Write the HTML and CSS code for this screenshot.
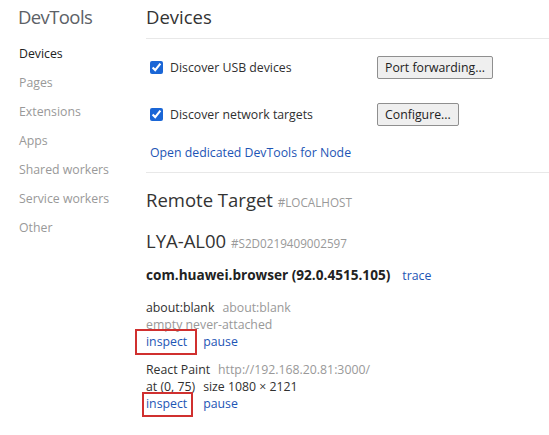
FILE: index.html
```html
<!DOCTYPE html>
<html>
<head>
<meta charset="utf-8">
<link rel="stylesheet" href="styles.css">
</head>
<body>
<div class="page">
  <nav class="sidebar">
    <div class="brand">DevTools</div>
    <ul class="menu">
      <li class="menu-item active">Devices</li>
      <li class="menu-item">Pages</li>
      <li class="menu-item">Extensions</li>
      <li class="menu-item">Apps</li>
      <li class="menu-item">Shared workers</li>
      <li class="menu-item">Service workers</li>
      <li class="menu-item">Other</li>
    </ul>
  </nav>
  <main class="content">
    <h1 class="page-title">Devices</h1>
    <section class="settings">
      <div class="setting-row">
        <label class="check"><input type="checkbox" checked><span>Discover USB devices</span></label>
        <button class="btn">Port forwarding...</button>
      </div>
      <div class="setting-row">
        <label class="check"><input type="checkbox" checked><span>Discover network targets</span></label>
        <button class="btn">Configure...</button>
      </div>
      <a class="node-link">Open dedicated DevTools for Node</a>
    </section>
    <section class="remote">
      <h2 class="section-title">Remote Target <span class="tag">#LOCALHOST</span></h2>
      <h2 class="section-title device">LYA-AL00 <span class="tag">#S2D0219409002597</span></h2>
      <div class="browser"><span class="browser-name">com.huawei.browser (92.0.4515.105)</span><a class="action trace">trace</a></div>
      <div class="target">
        <div class="line"><span class="name">about:blank</span><span class="url">about:blank</span></div>
        <div class="line dim">empty never-attached</div>
        <div class="line actions"><a class="action inspect mark-a">inspect</a><a class="action">pause</a></div>
      </div>
      <div class="target">
        <div class="line"><span class="name">React Paint</span><span class="url">http://192.168.20.81:3000/</span></div>
        <div class="line"><span>at (0, 75)</span><span class="size">size 1080 × 2121</span></div>
        <div class="line actions"><a class="action inspect mark-b">inspect</a><a class="action">pause</a></div>
      </div>
    </section>
  </main>
</div>
</body>
</html>
```

FILE: styles.css
```css
* { box-sizing: border-box; }
html, body { margin: 0; padding: 0; background: #fff; }
body {
  font-family: "Open Sans", "Noto Sans", sans-serif;
  font-size: 12.3px;
  color: #303030;
}
.page { display: flex; width: 549px; height: 435px; overflow: hidden; }
.sidebar { width: 146px; flex: none; padding-left: 18px; }
.brand {
  height: 39px;
  line-height: 33px;
  font-size: 18.5px;
  letter-spacing: -0.6px;
  color: #5c6166;
}
.menu { list-style: none; margin: 0; padding: 0 0 0 1px; }
.menu-item { height: 29px; line-height: 29px; color: #999; }
.menu-item.active { color: #222; }

.content { flex: 1; min-width: 0; }
.page-title {
  margin: 0;
  height: 39px;
  line-height: 34px;
  font-size: 18.5px;
  font-weight: normal;
  color: #333;
  border-bottom: 1px solid #e8e8e8;
}
.settings {
  padding: 17px 0 9px 4px;
  border-bottom: 1px solid #e8e8e8;
  display: flex;
  flex-direction: column;
}
.setting-row { display: flex; align-items: center; height: 23px; margin-bottom: 24px; }
.setting-row + .setting-row { margin-bottom: 17px; }
.check { display: flex; align-items: center; width: 227px; }
.check input {
  margin: 0 7px 0 0;
  width: 13px; height: 13px;
  accent-color: #1a66d6;
}
.btn {
  font: inherit;
  height: 23px;
  padding: 0 7px;
  background: #efefef;
  border: 1px solid #8f8f8f;
  border-radius: 2px;
  color: #222;
}
.node-link { color: #1d55b5; line-height: 20px; }

.remote { padding-top: 13px; }
.section-title {
  margin: 0 0 13px;
  height: 28px;
  line-height: 28px;
  font-size: 18.5px;
  font-weight: normal;
  color: #333;
}
.section-title.device { margin-bottom: 10px; }
.tag { font-size: 11.7px; color: #999; }
.browser { line-height: 20px; margin-bottom: 13px; }
.browser-name { font-weight: bold; font-size: 13.6px; color: #222; }
.action { color: #1d55b5; }
.trace { margin-left: 12px; }
.target { margin-bottom: 11px; }
.line { line-height: 17px; }
.url, .dim { color: #999; }
.url { margin-left: 8px; }
.size { margin-left: 8px; }
.actions .action + .action { margin-left: 16px; }
.inspect { position: relative; }
.inspect::after {
  content: "";
  position: absolute;
  border: 2px solid #d0302f;
}
.mark-a::after { left: -11px; right: -10px; top: -4px; bottom: -5px; }
.mark-b::after { left: -4px; right: -6px; top: -3px; bottom: -5px; }
```
